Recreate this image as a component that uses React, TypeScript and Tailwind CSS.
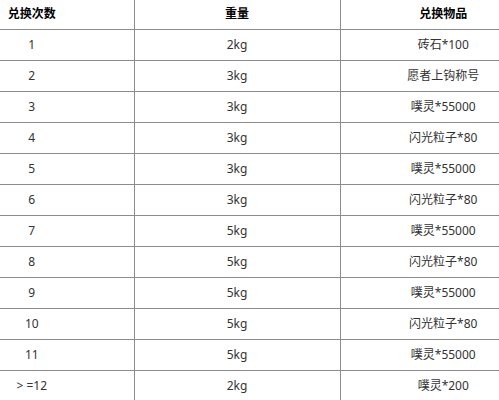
const rows: Array<[string, string, string]> = [
  ["1", "2kg", "砖石*100"],
  ["2", "3kg", "愿者上钩称号"],
  ["3", "3kg", "噗灵*55000"],
  ["4", "3kg", "闪光粒子*80"],
  ["5", "3kg", "噗灵*55000"],
  ["6", "3kg", "闪光粒子*80"],
  ["7", "5kg", "噗灵*55000"],
  ["8", "5kg", "闪光粒子*80"],
  ["9", "5kg", "噗灵*55000"],
  ["10", "5kg", "闪光粒子*80"],
  ["11", "5kg", "噗灵*55000"],
  ["> =12", "2kg", "噗灵*200"],
];

const App = () => {
  return (
    <div className="w-[499px] h-[400px] overflow-hidden bg-white font-['Noto_Sans','Noto_Sans_CJK_SC',sans-serif] text-[12px]">
      <table className="w-[499px] border-collapse table-fixed">
        <colgroup>
          <col className="w-[134px]" />
          <col className="w-[206px]" />
          <col className="w-[159px]" />
        </colgroup>
        <thead>
          <tr className="h-[29px] border-b border-[#8c8c8c]">
            <th className="p-0 pr-[70px] font-bold text-black text-center">兑换次数</th>
            <th className="p-0 font-bold text-black text-center border-l border-[#8c8c8c]">重量</th>
            <th className="p-0 pl-[47px] font-bold text-black text-center border-l border-[#8c8c8c]">兑换物品</th>
          </tr>
        </thead>
        <tbody>
          {rows.map(([n, w, item], i) => (
            <tr key={i} className="h-[31px] border-b border-[#8c8c8c]">
              <td className="p-0 pr-[70px] text-center text-[#333]">{n}</td>
              <td className="p-0 text-center text-[#333] border-l border-[#8c8c8c]">{w}</td>
              <td className="p-0 pl-[47px] text-center text-[#333] border-l border-[#8c8c8c]">{item}</td>
            </tr>
          ))}
        </tbody>
      </table>
    </div>
  );
};

export default App;
